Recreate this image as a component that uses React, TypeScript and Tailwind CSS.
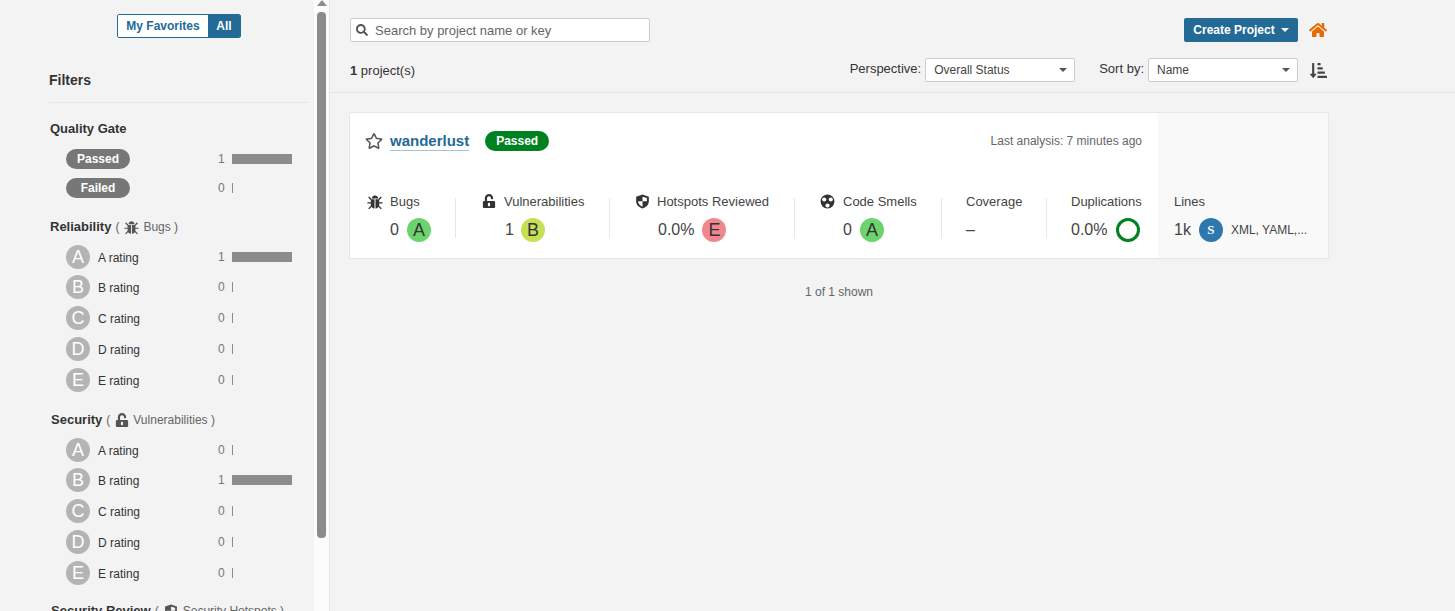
import React from "react";
import { FaHome, FaRegStar, FaSearch, FaSortAmountDownAlt, FaUnlockAlt } from "react-icons/fa";

const Bug = ({ className }: { className?: string }) => (
  <svg viewBox="0 0 16 16" className={className} fill="currentColor">
    <path d="M4.8 4.4C5 2.6 6.3 1.4 8 1.4s3 1.2 3.2 3H4.8z" />
    <path d="M3.8 5.2h3.7v9.4C5.3 14.4 3.8 12.8 3.8 10.8V5.2zM8.5 5.2h3.7v5.6c0 2-1.5 3.6-3.7 3.8V5.2z" />
    <path d="M1.2 3.4l1-.9 2.4 2.6-1 .9zM14.8 3.4l-1-.9-2.4 2.6 1 .9zM.4 8.2h3.8v1.2H.4zM11.8 8.2h3.8v1.2h-3.8zM1.2 14.4l2.8-3 1 .9-2.8 3zM14.8 14.4l-2.8-3-1 .9 2.8 3z" />
  </svg>
);

const Shield = ({ className }: { className?: string }) => (
  <svg viewBox="0 0 16 16" className={className} fill="currentColor">
    <path fillRule="evenodd" d="M8 .6l6.8 2.3v4.5c0 3.9-2.7 6.8-6.8 8-4.1-1.2-6.8-4.1-6.8-8V2.9L8 .6zM8 3v4.8H3.3c.1 2.7 2 4.7 4.7 5.7V7.8h4.7V4.3L8 3z" />
  </svg>
);

const Smell = ({ className }: { className?: string }) => (
  <svg viewBox="0 0 16 16" className={className}>
    <circle cx="8" cy="8" r="7.4" fill="currentColor" />
    <circle cx="4.5" cy="5.8" r="2.2" fill="#fff" />
    <circle cx="11.5" cy="5.8" r="2.2" fill="#fff" />
    <circle cx="8" cy="12.2" r="2.2" fill="#fff" />
    <circle cx="8" cy="7.8" r="1.5" fill="currentColor" />
  </svg>
);

const Count = ({ n }: { n: number }) => (
  <div className="ml-auto flex items-center">
    <span className="w-[6px] text-[12px] text-[#777]">{n}</span>
    <span className="ml-[8px] flex w-[60px] items-center">
      {n ? <span className="h-[10px] w-[60px] bg-[#8c8c8c]" /> : <span className="h-[10px] w-px bg-[#8c8c8c]" />}
    </span>
  </div>
);

const GateRow = ({ label, n, cls }: { label: string; n: number; cls: string }) => (
  <div className={`flex h-[20px] items-center pr-[22px] ${cls}`}>
    <span className="flex h-[20px] w-[64px] items-center justify-center rounded-full bg-[#777] text-[12px] font-bold text-white">{label}</span>
    <Count n={n} />
  </div>
);

const RatingRow = ({ r, n, cls }: { r: string; n: number; cls: string }) => (
  <div className={`flex h-[24px] items-center pr-[22px] ${cls}`}>
    <span className="flex h-[24px] w-[24px] items-center justify-center rounded-full bg-[#b4b4b4] pb-px text-[18px] leading-none text-white">{r}</span>
    <span className="ml-[8px] pt-px text-[12px] text-[#333]">{r} rating</span>
    <Count n={n} />
  </div>
);

const Ratings = ({ one }: { one: string }) => (
  <div className="mt-[10px] pl-[17px]">
    {["A", "B", "C", "D", "E"].map((r, i) => (
      <RatingRow key={r} r={r} n={r === one ? 1 : 0} cls={i === 0 ? "" : i === 1 ? "mt-[6px]" : "mt-[7px]"} />
    ))}
  </div>
);

const Select = ({ value }: { value: string }) => (
  <div className="flex h-[24px] w-[150px] items-center justify-between rounded-[2px] border border-[#cdcdcd] bg-white pl-[8px] pr-[7px] text-[12px] text-[#444]">
    <span>{value}</span>
    <span className="h-0 w-0 border-x-[4px] border-t-[4px] border-x-transparent border-t-[#555]" />
  </div>
);

const Rating = ({ r, cls }: { r: string; cls: string }) => (
  <span className={`flex h-[24px] w-[24px] items-center justify-center rounded-full text-[18px] leading-none ${cls}`}>{r}</span>
);

const Measure = ({
  icon,
  label,
  value,
  after,
  cls,
  labelCls = "",
}: {
  icon?: React.ReactNode;
  label: string;
  value: string;
  after?: React.ReactNode;
  cls: string;
  labelCls?: string;
}) => (
  <div className={`flex h-[40px] items-stretch ${cls}`}>
    {icon && <div className="-mt-[4px] w-[23px] shrink-0 text-[#333]">{icon}</div>}
    <div className="flex flex-col">
      <div className={`-mt-[4px] h-[16px] whitespace-nowrap text-[13px] leading-[16px] text-[#444] ${labelCls}`}>{label}</div>
      <div className="mt-[8px] flex h-[24px] items-center text-[16px] text-[#444]">
        {value}
        {after}
      </div>
    </div>
  </div>
);

export default function App() {
  return (
    <div className="flex h-[611px] overflow-hidden bg-[#f3f3f3] font-['Liberation_Sans',Arial,sans-serif] text-[#333]">
      <aside className="relative flex h-[611px] w-[330px] shrink-0 overflow-hidden border-r border-[#e6e6e6]">
        <div className="w-[314px] shrink-0 pl-[49px]">
          <div className="mt-[14px] ml-[68px] flex h-[24px] w-[124px] overflow-hidden rounded-[2px] border border-[#236a97] text-[12px] font-bold">
            <span className="flex flex-1 items-center justify-center bg-white text-[#236a97]">My Favorites</span>
            <span className="flex w-[32px] items-center justify-center bg-[#236a97] text-white">All</span>
          </div>
          <div className="mt-[33px] flex h-[32px] w-[260px] items-start border-b border-[#e6e6e6] text-[14px] font-bold leading-[18px] text-[#333]">Filters</div>
          <div className="mt-[18px] pl-px text-[13px] font-bold leading-[16px] text-[#333]">Quality Gate</div>
          <div className="mt-[12px] pl-[17px]">
            <GateRow label="Passed" n={1} cls="" />
            <GateRow label="Failed" n={0} cls="mt-[9px]" />
          </div>
          <div className="mt-[21px] flex h-[16px] items-center pl-px text-[12px] text-[#666]">
            <span className="text-[13px] font-bold text-[#333]">Reliability</span>
            <span className="ml-[4px]">(</span>
            <Bug className="ml-[5px] h-[15px] w-[15px] text-[#555]" />
            <span className="ml-[4px]">Bugs )</span>
          </div>
          <Ratings one="A" />
          <div className="mt-[20px] flex h-[16px] items-center pl-[2px] text-[12px] text-[#666]">
            <span className="text-[13px] font-bold text-[#333]">Security</span>
            <span className="ml-[4px]">(</span>
            <FaUnlockAlt className="ml-[5px] h-[14px] w-[14px] text-[#555]" />
            <span className="ml-[4px]">Vulnerabilities )</span>
          </div>
          <Ratings one="B" />
          <div className="mt-[18px] flex h-[16px] items-center pl-[2px] text-[12px] text-[#666]">
            <span className="text-[13px] font-bold text-[#333]">Security Review</span>
            <span className="ml-[4px]">(</span>
            <Shield className="ml-[5px] h-[14px] w-[14px] text-[#555]" />
            <span className="ml-[5px]">Security Hotspots )</span>
          </div>
        </div>
        <div className="relative h-full w-[15px] shrink-0 bg-[#fcfcfc]">
          <span className="absolute left-[3px] top-0 h-0 w-0 border-x-[5px] border-b-[6px] border-x-transparent border-b-[#8c8c8c]" />
          <span className="absolute left-[3px] top-[12px] h-[526px] w-[9px] rounded-[4px] bg-[#8c8c8c]" />
        </div>
      </aside>
      <main className="min-w-0 flex-1">
        <div className="h-[93px] border-b border-[#e6e6e6] pl-[20px] pr-[128px] pt-[18px]">
          <div className="flex items-center">
            <div className="flex h-[24px] w-[300px] items-center rounded-[2px] border border-[#cdcdcd] bg-white pl-[5px] text-[12px] text-[#666]">
              <FaSearch className="h-[12px] w-[12px] text-[#555]" />
              <span className="ml-[7px] pt-px text-[13px]">Search by project name or key</span>
            </div>
            <div className="ml-auto flex h-[24px] w-[114px] items-center justify-center rounded-[2px] bg-[#236a97] text-[12px] font-bold text-white">
              Create Project
              <span className="ml-[6px] h-0 w-0 border-x-[4px] border-t-[4px] border-x-transparent border-t-white" />
            </div>
            <FaHome className="ml-[11px] h-[18px] w-[18px] text-[#e56a00]" />
          </div>
          <div className="mt-[16px] flex items-center">
            <div className="mt-[2px] text-[13px] text-[#333]"><b>1</b> project(s)</div>
            <div className="ml-auto flex items-center">
              <span className="mb-[2px] mr-[4px] text-[13px] text-[#333]">Perspective:</span>
              <Select value="Overall Status" />
              <span className="mb-[2px] ml-[24px] mr-[4px] text-[13px] text-[#333]">Sort by:</span>
              <Select value="Name" />
              <FaSortAmountDownAlt className="ml-[12px] h-[17px] w-[17px] text-[#444]" />
            </div>
          </div>
        </div>
        <div className="ml-[19px] mt-[19px] flex h-[147px] w-[980px] rounded-[2px] border border-[#e6e6e6] bg-white">
          <div className="w-[808px] shrink-0 pl-[15px] pr-[16px]">
            <div className="mt-[18px] flex h-[20px] items-center">
              <FaRegStar className="h-[18px] w-[18px] text-[#555]" />
              <span className="ml-[7px] border-b border-[#9fc3da] text-[15px] font-bold leading-[18px] text-[#236a97]">wanderlust</span>
              <span className="ml-[16px] flex h-[20px] w-[64px] items-center justify-center rounded-full bg-[#008223] text-[12px] font-bold text-white">Passed</span>
              <span className="ml-auto text-[12px] text-[#666]">Last analysis: 7 minutes ago</span>
            </div>
            <div className="mt-[47px] flex">
              <Measure cls="w-[91px] border-r border-[#e6e6e6] pl-[2px]" icon={<Bug className="h-[16px] w-[16px]" />} label="Bugs" value="0" after={<Rating r="A" cls="ml-[8px] bg-[#6cd46c] text-[#333]" />} />
              <Measure cls="w-[154px] border-r border-[#e6e6e6] pl-[26px]" icon={<FaUnlockAlt className="h-[14px] w-[14px]" />} label="Vulnerabilities" labelCls="-ml-px" value="1" after={<Rating r="B" cls="ml-[7px] bg-[#c6e056] text-[#333]" />} />
              <Measure cls="w-[185px] border-r border-[#e6e6e6] pl-[25px]" icon={<Shield className="h-[15px] w-[15px]" />} label="Hotspots Reviewed" labelCls="-ml-px" value="0.0%" after={<Rating r="E" cls="ml-[8px] bg-[#f0878e] text-[#333]" />} />
              <Measure cls="w-[147px] border-r border-[#e6e6e6] pl-[25px]" icon={<Smell className="h-[15px] w-[15px]" />} label="Code Smells" value="0" after={<Rating r="A" cls="ml-[8px] bg-[#6cd46c] text-[#333]" />} />
              <Measure cls="w-[105px] border-r border-[#e6e6e6] pl-[24px]" label="Coverage" value="–" />
              <Measure cls="pl-[24px]" label="Duplications" value="0.0%" after={<span className="ml-[9px] h-[24px] w-[24px] rounded-full border-[3px] border-[#008223]" />} />
            </div>
          </div>
          <div className="flex-1 rounded-r-[2px] bg-[#f9f9f9] pl-[16px] pt-[85px]">
            <Measure
              cls=""
              label="Lines"
              value="1k"
              after={
                <>
                  <span className="ml-[8px] flex h-[24px] w-[24px] items-center justify-center rounded-full bg-[#2d78ad] font-['Liberation_Serif',serif] text-[13px] font-bold text-white">S</span>
                  <span className="ml-[8px] text-[12px] text-[#444]">XML, YAML,...</span>
                </>
              }
            />
          </div>
        </div>
        <div className="ml-[19px] mt-[24px] w-[980px] text-center text-[12px] text-[#666]">1 of 1 shown</div>
      </main>
    </div>
  );
}
